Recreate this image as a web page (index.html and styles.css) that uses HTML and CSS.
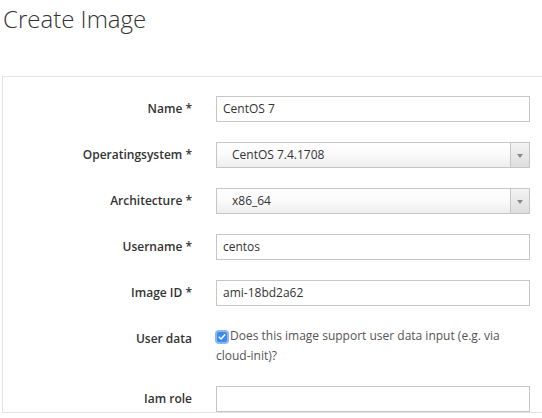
FILE: index.html
```html
<!DOCTYPE html>
<html>
<head>
<meta charset="utf-8">
<link rel="stylesheet" href="styles.css">
</head>
<body>
<h1 class="title">Create Image</h1>
<div class="panel">
  <form class="form">
    <label class="lbl">Name *</label>
    <div class="field"><div class="input">CentOS 7</div></div>

    <label class="lbl">Operatingsystem *</label>
    <div class="field"><div class="select"><span class="sel-text">CentOS 7.4.1708</span><span class="sel-btn"><span class="arrow"></span></span></div></div>

    <label class="lbl">Architecture *</label>
    <div class="field"><div class="select"><span class="sel-text">x86_64</span><span class="sel-btn"><span class="arrow"></span></span></div></div>

    <label class="lbl">Username *</label>
    <div class="field"><div class="input">centos</div></div>

    <label class="lbl">Image ID *</label>
    <div class="field"><div class="input">ami-18bd2a62</div></div>

    <label class="lbl">User data</label>
    <div class="field check-field"><span class="checkbox"><svg width="8" height="8" viewBox="0 0 8 8"><path d="M1.2 4.2 L3.1 6 L6.8 1.8" fill="none" stroke="#fff" stroke-width="1.5" stroke-linecap="round" stroke-linejoin="round"/></svg></span>Does this image support user data input (e.g. via cloud-init)?</div>

    <label class="lbl">Iam role</label>
    <div class="field"><div class="input"></div></div>
  </form>
</div>
</body>
</html>
```
FILE: styles.css
```css
html, body {
  margin: 0;
  padding: 0;
  background: #fff;
  overflow: hidden;
}
body {
  font-family: "Open Sans", "Liberation Sans", sans-serif;
  color: #333;
  width: 542px;
  height: 418px;
}
.title {
  margin: 0;
  padding: 2px 0 0 3px;
  font-size: 24px;
  font-weight: 300;
  line-height: 34px;
  color: #333;
}
.panel {
  margin: 40px 0 0 2px;
  border: 1px solid #e3e3e3;
  border-right: none;
  padding-top: 19px;
}
.form {
  display: grid;
  grid-template-columns: 189px 314px;
  column-gap: 24px;
  row-gap: 20px;
}
.lbl {
  text-align: right;
  font-size: 12px;
  font-weight: 600;
  line-height: 26px;
  color: #333;
}
.field {
  font-size: 12px;
}
.input {
  box-sizing: border-box;
  height: 26px;
  border: 1px solid #c6c6c6;
  padding: 0 6px;
  line-height: 24px;
  color: #333;
  background: #fff;
}
.select {
  box-sizing: border-box;
  height: 26px;
  border: 1px solid #c6c6c6;
  display: flex;
  background: linear-gradient(#ffffff, #fafafa 50%, #eeeeee);
}
.sel-text {
  flex: 1;
  padding-left: 15px;
  line-height: 24px;
  color: #333;
}
.sel-btn {
  width: 18px;
  border-left: 1px solid #c6c6c6;
  background: linear-gradient(#f3f3f3, #dedede);
  display: flex;
  align-items: center;
  justify-content: center;
}
.arrow {
  width: 0;
  height: 0;
  border-left: 3px solid transparent;
  border-right: 3px solid transparent;
  border-top: 4px solid #888;
  margin-top: 1px;
}
.check-field {
  font-size: 12px;
  line-height: 20px;
  color: #555;
}
.checkbox {
  display: inline-flex;
  align-items: center;
  justify-content: center;
  box-sizing: border-box;
  width: 10px;
  height: 10px;
  margin: 0 3px 0 1px;
  vertical-align: -1px;
  border-radius: 2px;
  background: #3b8beb;
  box-shadow: 0 0 0 2px #8ab9f2;
}
```
